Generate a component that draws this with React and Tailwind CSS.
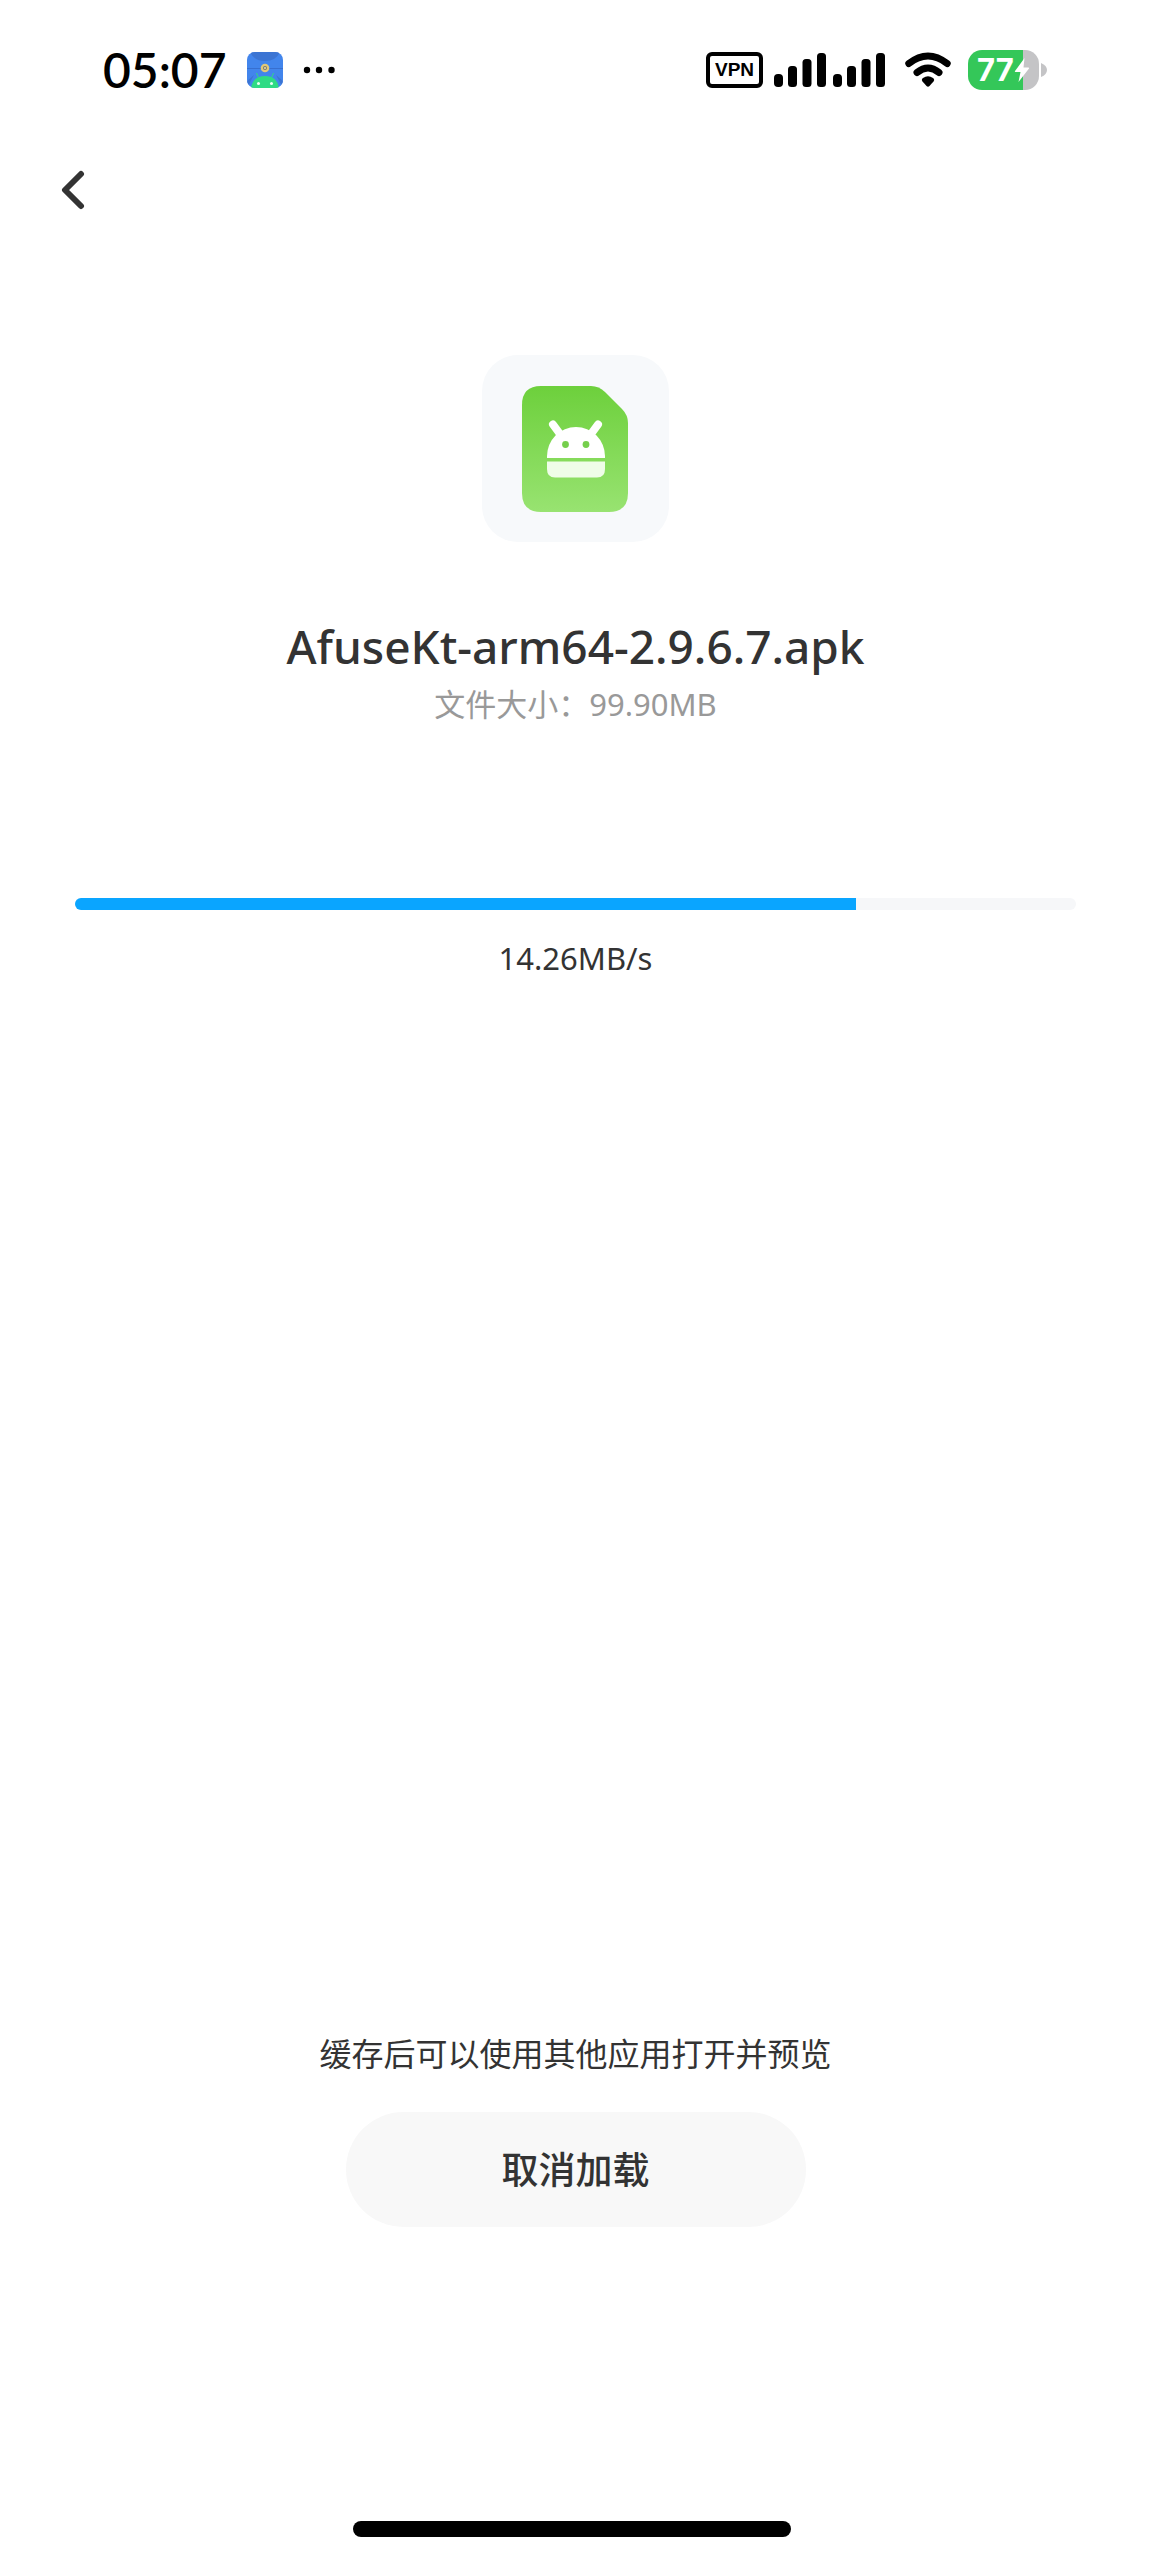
import React from 'react';

const file = {
    name: 'AfuseKt-arm64-2.9.6.7.apk',
    size: '99.90MB',
    speed: '14.26MB/s',
    progress: 78,
};

const SignalIcon = () => (
    <svg width="52" height="36" viewBox="0 0 52 36" aria-hidden="true">
        <rect x="0" y="22" width="9" height="13" rx="4" />
        <rect x="14" y="14" width="9" height="21" rx="3.5" />
        <rect x="28.5" y="7" width="9" height="28" rx="3.5" />
        <rect x="43" y="1" width="9" height="34" rx="3.5" />
    </svg>
);

const WifiIcon = () => (
    <svg width="46" height="36" viewBox="0 0 46 36" fill="none" stroke="#000" strokeWidth="7" strokeLinecap="round" aria-hidden="true">
        <path d="M3.8 11.5 Q23 -3.5 42.2 11.5" />
        <path d="M12 20.5 Q23 11.5 34 20.5" />
        <path d="M18 26 Q23 22.5 28 26 Q30 27.5 28.5 29.5 L24.5 34 Q23 35.5 21.5 34 L17.5 29.5 Q16 27.5 18 26Z" fill="#000" stroke="none" />
    </svg>
);

const AppIcon = () => (
    <svg width="36" height="36" viewBox="0 0 36 36" aria-hidden="true">
        <defs>
            <clipPath id="app-icon">
                <rect width="36" height="36" rx="8" />
            </clipPath>
        </defs>
        <g clipPath="url(#app-icon)">
            <rect width="36" height="36" fill="#4285ec" />
            <path d="M3 0 H33 Q29 9 18 9 Q7 9 3 0Z" fill="#3b74d3" />
            <path d="M0 16.5 H36" stroke="#376fd0" strokeWidth="1" />
            <path d="M0 36 V29 L7 23 M36 36 V29 L29 23" fill="#3b74d3" />
            <path d="M9.5 21 L12 27 M26.5 21 L24 27" stroke="#2fdb84" strokeWidth="1" />
            <path d="M4 36 Q6 24 18 24 Q30 24 32 36Z" fill="#2fdb84" />
            <circle cx="11.5" cy="31.5" r="1.5" fill="#e8fff4" />
            <circle cx="24.5" cy="31.5" r="1.5" fill="#e8fff4" />
            <circle cx="18" cy="16" r="4.3" fill="#e2c878" />
            <circle cx="18" cy="16" r="2" fill="#75766f" />
            <circle cx="18" cy="16" r="1" fill="#f4e3a8" />
        </g>
    </svg>
);

const Battery = () => (
    <div className="flex items-center gap-0.5">
        <div className="flex h-10 w-[71px] items-center rounded-[14px] bg-[linear-gradient(to_right,#34c759_77%,#c4c4c6_77%)] pl-[9px]">
            <span className="font-['Inter',sans-serif] text-[31px] leading-10 font-bold text-white">77</span>
            <svg width="16" height="26" viewBox="0 0 16 26" fill="#fff" aria-hidden="true">
                <path d="M10.5 1 L1 14 Q0.5 15 1.5 15 H6.5 L4.5 25 L15 11.5 Q15.5 10.5 14.5 10.5 H9.5Z" />
            </svg>
        </div>
        <svg width="6" height="14" viewBox="0 0 6 14" fill="#c4c4c6" aria-hidden="true">
            <path d="M0 0 Q6 2.5 6 7 Q6 11.5 0 14Z" />
        </svg>
    </div>
);

const StatusBar = () => (
    <header className="flex h-[140px] items-center justify-between pr-[104px] pl-[103px] text-black">
        <div className="flex items-center gap-5">
            <span className="font-['Lato',sans-serif] text-[48px] leading-[56px] font-semibold">05:07</span>
            <AppIcon />
            <svg width="32" height="8" viewBox="0 0 32 8" aria-hidden="true">
                <circle cx="4" cy="4" r="3.2" />
                <circle cx="16" cy="4" r="3.2" />
                <circle cx="28.5" cy="4" r="3.2" />
            </svg>
        </div>
        <div className="flex items-center">
            <span className="flex h-9 w-[57px] items-center justify-center rounded-md border-4 border-black font-['Liberation_Sans',sans-serif] text-[19px] font-bold">
                VPN
            </span>
            <div className="flex gap-[7px] pr-5 pl-[11px]">
                <SignalIcon />
                <SignalIcon />
            </div>
            <WifiIcon />
            <div className="pl-[17px]">
                <Battery />
            </div>
        </div>
    </header>
);

const ApkIcon = () => (
    <svg width="107" height="126" viewBox="0 0 107 126" aria-hidden="true">
        <defs>
            <linearGradient id="apk-sheet" x1="0" y1="0" x2="0" y2="1">
                <stop offset="0" stopColor="#6dd03c" />
                <stop offset="1" stopColor="#98e371" />
            </linearGradient>
        </defs>
        <path
            d="M19 0 H69 Q77 0 83 6 L100 23 Q106 29 106 37 V107 Q106 126 87 126 H19 Q0 126 0 107 V19 Q0 0 19 0Z"
            fill="url(#apk-sheet)"
        />
        <path d="M31 38.5 L38 48 M76 38.5 L69 48" stroke="#fff" strokeWidth="8" strokeLinecap="round" />
        <path d="M25 72 V70 A29 29 0 0 1 83 70 V72Z" fill="#fff" />
        <path d="M25 75.5 H83 V83 Q83 91.5 75 91.5 H33 Q25 91.5 25 83Z" fill="#effde8" />
        <circle cx="43.5" cy="58.5" r="3.4" fill="#75cf4c" />
        <circle cx="64" cy="58.5" r="3.4" fill="#75cf4c" />
    </svg>
);

const App = () => {
    return (
        <div className="flex min-h-screen flex-col bg-white font-['Noto_Sans','Noto_Sans_CJK_SC',sans-serif] text-[#333]">
            <StatusBar />

            <nav className="px-[51px] pt-6">
                <button aria-label="返回" className="flex h-[52px] w-11 items-center justify-center">
                    <svg width="24" height="40" viewBox="0 0 24 40" fill="none" stroke="#333" strokeWidth="6" strokeLinecap="round" strokeLinejoin="round">
                        <path d="M20 4 L4 20 L20 36" />
                    </svg>
                </button>
            </nav>

            <main className="flex flex-1 flex-col items-center px-[75px] pt-[139px]">
                <div className="flex size-[187px] items-center justify-center rounded-[36px] bg-[#f7f9fb]">
                    <ApkIcon />
                </div>
                <h1 className="pt-[76px] text-[46px] leading-[56px] font-medium">{file.name}</h1>
                <p className="pt-2 text-[31px] leading-[44px] text-[#999]">文件大小：{file.size}</p>

                <div className="mt-[172px] h-3 w-full overflow-hidden rounded-full bg-[#f6f7f9]" role="progressbar" aria-label={file.name} aria-valuenow={file.progress}>
                    <div className="h-full bg-[#0aa5ff]" style={{ width: `${file.progress}%` }}></div>
                </div>
                <p className="pt-[26px] text-[31px] leading-[44px]">{file.speed}</p>
            </main>

            <footer className="flex flex-col items-center">
                <p className="text-[32px] leading-[44px]">缓存后可以使用其他应用打开并预览</p>
                <button className="mt-9 h-[115px] w-[460px] rounded-full bg-[#f8f8f8] text-[37px] font-medium">
                    取消加载
                </button>
                <div className="w-full pt-[294px] pr-2 pb-[23px]">
                    <div className="mx-auto h-4 w-[438px] rounded-full bg-black"></div>
                </div>
            </footer>
        </div>
    );
};

export default App;
